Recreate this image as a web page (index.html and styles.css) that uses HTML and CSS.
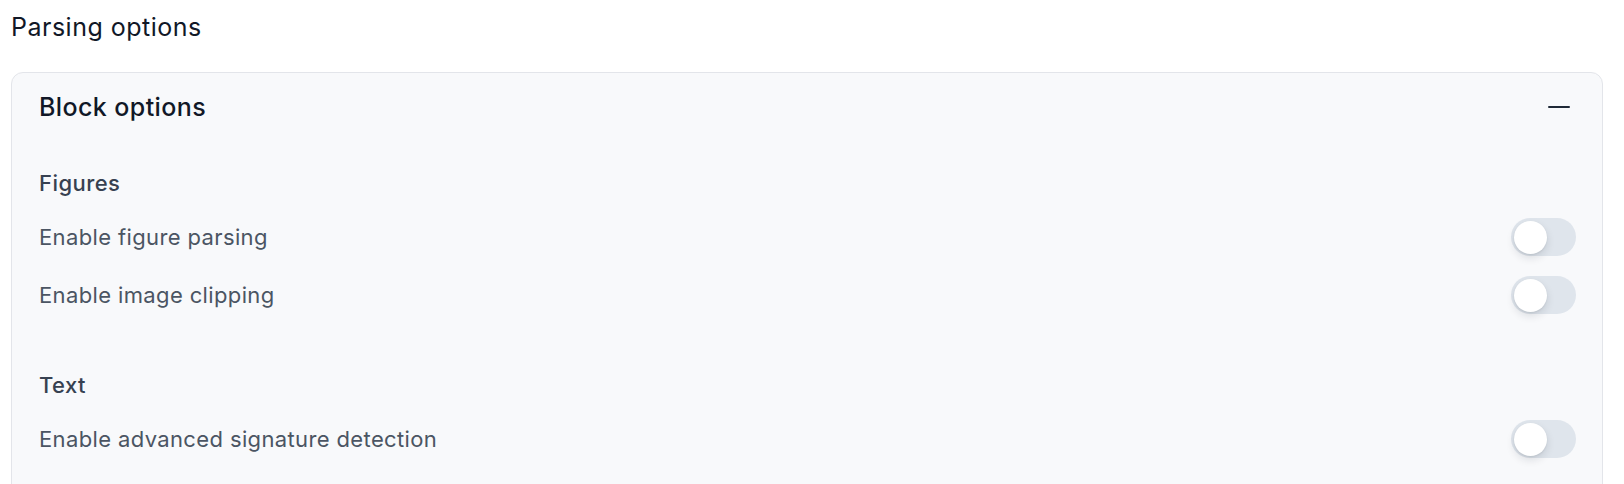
FILE: index.html
```html
<!DOCTYPE html>
<html>
<head>
    <title>Parsing options</title>
    <link rel="stylesheet" href="styles.css">
</head>
<body>
    <div class="page">
        <h2 class="title">Parsing options</h2>
        <div class="card">
            <div class="card-head">
                <h3>Block options</h3>
                <span class="minus"></span>
            </div>
            <div class="section">
                <h4>Figures</h4>
                <div class="row">
                    <span>Enable figure parsing</span>
                    <span class="toggle"><span class="knob"></span></span>
                </div>
                <div class="row">
                    <span>Enable image clipping</span>
                    <span class="toggle"><span class="knob"></span></span>
                </div>
            </div>
            <div class="section">
                <h4>Text</h4>
                <div class="row">
                    <span>Enable advanced signature detection</span>
                    <span class="toggle"><span class="knob"></span></span>
                </div>
            </div>
        </div>
    </div>
</body>
</html>
```

FILE: styles.css
```css
body {
    margin: 0;
    font-family: Inter, "Noto Sans", sans-serif;
    background: #ffffff;
    overflow: hidden;
}
.page {
    padding: 12px 21px 0 11px;
}
.title {
    margin: 0;
    font-size: 25px;
    font-weight: 400;
    letter-spacing: 0.5px;
    line-height: 30px;
    color: #111827;
}
.card {
    margin-top: 30px;
    background: #f8f9fb;
    border: 1px solid #e3e5ea;
    border-radius: 12px;
    padding: 19px 26px 40px 27px;
}
.card-head {
    display: flex;
    align-items: center;
    justify-content: space-between;
    height: 30px;
}
.card-head h3 {
    margin: 0;
    font-size: 25px;
    font-weight: 500;
    letter-spacing: 0.4px;
    line-height: 30px;
    color: #111827;
}
.minus {
    width: 22px;
    height: 2px;
    background: #1f2937;
    border-radius: 1px;
    margin-right: 6px;
}
.section {
    display: flex;
    flex-direction: column;
    gap: 20px;
    margin-top: 46px;
}
.section + .section {
    margin-top: 56px;
}
.section h4 {
    margin: 0;
    font-size: 22px;
    font-weight: 500;
    letter-spacing: 0.45px;
    line-height: 30px;
    color: #374151;
}
.row {
    display: flex;
    align-items: center;
    justify-content: space-between;
    height: 38px;
    font-size: 22px;
    color: #4b5563;
    letter-spacing: 0.37px;
}
.toggle {
    width: 65px;
    height: 38px;
    border-radius: 19px;
    background: #dfe5ec;
    display: flex;
    align-items: center;
    padding-left: 3px;
    box-sizing: border-box;
}
.knob {
    width: 33px;
    height: 33px;
    border-radius: 50%;
    background: #ffffff;
    box-shadow: 0 4px 8px rgba(15, 23, 42, 0.12), 0 1px 2px rgba(15, 23, 42, 0.08);
}
```
